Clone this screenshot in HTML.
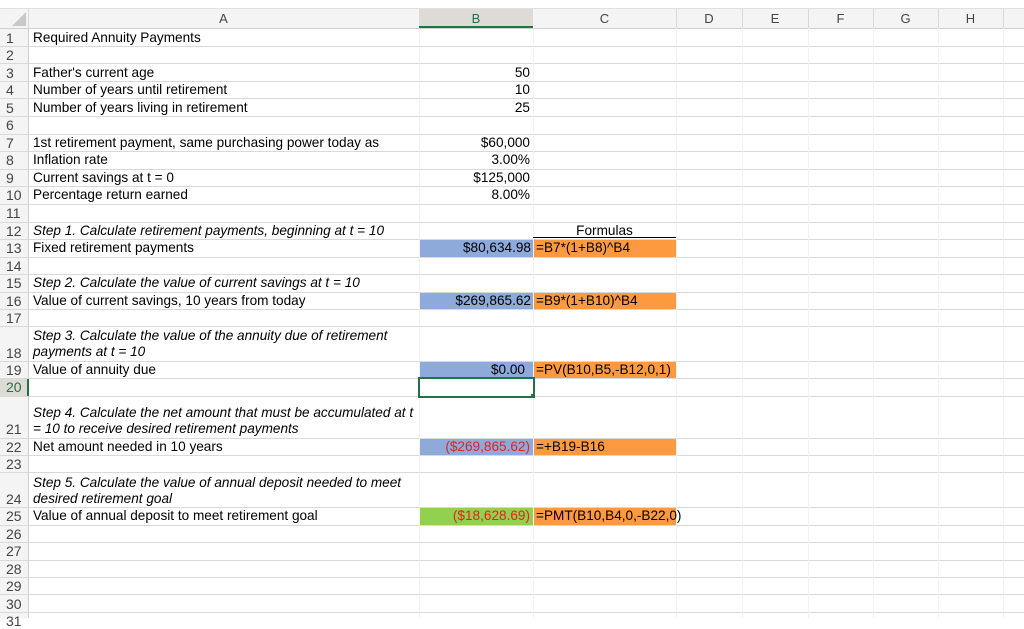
<!DOCTYPE html>
<html><head><style>
body{margin:0;width:1024px;height:618px;overflow:hidden;background:#fff;font-family:"Liberation Sans",Arial,sans-serif;font-size:13.6px;color:#000;position:relative}
.a{position:absolute}
.h{position:absolute;left:0;width:1024px;height:1px;background:#d9d9d9}
.v{position:absolute;top:28px;width:1px;height:590px;background:#f2f2f2}
.ch{position:absolute;top:9px;height:19px;line-height:19px;text-align:center;color:#444;font-size:13px}
.rn{position:absolute;left:0;width:27px;padding-left:6px;box-sizing:border-box;color:#444;font-size:14px;line-height:16px}
.t{position:absolute;left:33px;line-height:16px;white-space:nowrap}
.i{font-style:italic}
.r{position:absolute;left:419px;width:111px;text-align:right;line-height:16px}
</style></head><body>
<div class="a" style="left:0;top:9px;width:1024px;height:19px;background:#f4f4f4"></div>
<div class="a" style="left:0;top:8px;width:1024px;height:1px;background:#e0e0e0"></div>
<div class="a" style="left:0;top:28px;width:1024px;height:1px;background:#cfcfcf"></div>
<div class="a" style="left:419px;top:9px;width:114px;height:19px;background:#dedbd7"></div>
<div class="a" style="left:419px;top:26px;width:114px;height:2px;background:#217346"></div>
<svg class="a" style="left:12px;top:12px" width="14" height="14"><polygon points="14,0 14,14 0,14" fill="#c8c8c8"/></svg>
<div class="ch" style="left:28px;width:391px">A</div>
<div class="ch" style="left:419px;width:114px;color:#217346">B</div>
<div class="ch" style="left:533px;width:143px">C</div>
<div class="ch" style="left:676px;width:66px">D</div>
<div class="ch" style="left:742px;width:66px">E</div>
<div class="ch" style="left:808px;width:65px">F</div>
<div class="ch" style="left:873px;width:65px">G</div>
<div class="ch" style="left:938px;width:65px">H</div>
<div class="a" style="left:28px;top:9px;width:1px;height:19px;background:#d8d8d8"></div>
<div class="a" style="left:676px;top:9px;width:1px;height:19px;background:#d8d8d8"></div>
<div class="a" style="left:742px;top:9px;width:1px;height:19px;background:#d8d8d8"></div>
<div class="a" style="left:808px;top:9px;width:1px;height:19px;background:#d8d8d8"></div>
<div class="a" style="left:873px;top:9px;width:1px;height:19px;background:#d8d8d8"></div>
<div class="a" style="left:938px;top:9px;width:1px;height:19px;background:#d8d8d8"></div>
<div class="a" style="left:1003px;top:9px;width:1px;height:19px;background:#d8d8d8"></div>

<div class="a" style="left:0;top:29px;width:28px;height:589px;background:#f4f4f4"></div>
<div class="a" style="left:0;top:378px;width:28px;height:18px;background:#dedbd7"></div>
<div class="a" style="left:28px;top:29px;width:1px;height:589px;background:#cfcfcf"></div>
<div class="a" style="left:27px;top:378px;width:2px;height:18px;background:#217346"></div>

<div class="a" style="left:419px;top:239px;width:114px;height:18px;background:#8eaadb"></div>
<div class="a" style="left:533px;top:239px;width:143px;height:18px;background:#fd9a3f"></div>
<div class="a" style="left:419px;top:292px;width:114px;height:17px;background:#8eaadb"></div>
<div class="a" style="left:533px;top:292px;width:143px;height:17px;background:#fd9a3f"></div>
<div class="a" style="left:419px;top:361px;width:114px;height:17px;background:#8eaadb"></div>
<div class="a" style="left:533px;top:361px;width:143px;height:17px;background:#fd9a3f"></div>
<div class="a" style="left:419px;top:438px;width:114px;height:17px;background:#8eaadb"></div>
<div class="a" style="left:533px;top:438px;width:143px;height:17px;background:#fd9a3f"></div>
<div class="a" style="left:419px;top:507px;width:114px;height:18px;background:#92d050"></div>
<div class="a" style="left:533px;top:507px;width:143px;height:18px;background:#fd9a3f"></div>

<div class="h" style="top:46px"></div><div class="h" style="top:63px"></div><div class="h" style="top:81px"></div>
<div class="h" style="top:98px"></div><div class="h" style="top:116px"></div><div class="h" style="top:134px"></div>
<div class="h" style="top:151px"></div><div class="h" style="top:169px"></div><div class="h" style="top:186px"></div>
<div class="h" style="top:204px"></div><div class="h" style="top:222px"></div><div class="h" style="top:239px"></div>
<div class="h" style="top:257px"></div><div class="h" style="top:274px"></div><div class="h" style="top:292px"></div>
<div class="h" style="top:309px"></div><div class="h" style="top:326px"></div><div class="h" style="top:361px"></div>
<div class="h" style="top:378px"></div><div class="h" style="top:396px"></div><div class="h" style="top:438px"></div>
<div class="h" style="top:455px"></div><div class="h" style="top:472px"></div><div class="h" style="top:507px"></div>
<div class="h" style="top:525px"></div><div class="h" style="top:542px"></div><div class="h" style="top:560px"></div>
<div class="h" style="top:577px"></div><div class="h" style="top:594px"></div><div class="h" style="top:612px"></div>
<div class="v" style="left:419px"></div><div class="v" style="left:533px"></div><div class="v" style="left:676px"></div>
<div class="v" style="left:742px"></div><div class="v" style="left:808px"></div><div class="v" style="left:873px"></div>
<div class="v" style="left:938px"></div><div class="v" style="left:1003px"></div>
<div class="a" style="left:533px;top:237px;width:143px;height:1px;background:#000"></div>

<div class="a" style="left:418px;top:377px;width:113px;height:17px;border:2px solid #217346"></div>
<div class="a" style="left:531px;top:394px;width:4px;height:4px;background:#217346"></div>

<div class="rn" style="top:30px">1</div><div class="rn" style="top:47px">2</div><div class="rn" style="top:65px">3</div>
<div class="rn" style="top:82px">4</div><div class="rn" style="top:100px">5</div><div class="rn" style="top:117px">6</div>
<div class="rn" style="top:135px">7</div><div class="rn" style="top:152px">8</div><div class="rn" style="top:170px">9</div>
<div class="rn" style="top:187px">10</div><div class="rn" style="top:205px">11</div><div class="rn" style="top:223px">12</div>
<div class="rn" style="top:240px">13</div><div class="rn" style="top:258px">14</div><div class="rn" style="top:275px">15</div>
<div class="rn" style="top:293px">16</div><div class="rn" style="top:310px">17</div><div class="rn" style="top:345px">18</div>
<div class="rn" style="top:362px">19</div><div class="rn" style="top:379px;color:#217346">20</div><div class="rn" style="top:421px">21</div>
<div class="rn" style="top:439px">22</div><div class="rn" style="top:456px">23</div><div class="rn" style="top:491px">24</div>
<div class="rn" style="top:508px">25</div><div class="rn" style="top:526px">26</div><div class="rn" style="top:543px">27</div>
<div class="rn" style="top:561px">28</div><div class="rn" style="top:578px">29</div><div class="rn" style="top:596px">30</div>
<div class="rn" style="top:613px">31</div>

<div class="t" style="top:30px">Required Annuity Payments</div>
<div class="t" style="top:65px">Father's current age</div>
<div class="t" style="top:82px">Number of years until retirement</div>
<div class="t" style="top:100px">Number of years living in retirement</div>
<div class="t" style="top:135px">1st retirement payment, same purchasing power today as</div>
<div class="t" style="top:152px">Inflation rate</div>
<div class="t" style="top:170px">Current savings at t = 0</div>
<div class="t" style="top:187px">Percentage return earned</div>
<div class="t i" style="top:223px">Step 1. Calculate retirement payments, beginning at t = 10</div>
<div class="t" style="top:240px">Fixed retirement payments</div>
<div class="t i" style="top:275px">Step 2. Calculate the value of current savings at t = 10</div>
<div class="t" style="top:293px">Value of current savings, 10 years from today</div>
<div class="t i" style="top:328px">Step 3. Calculate the value of the annuity due of retirement<br>payments at t = 10</div>
<div class="t" style="top:362px">Value of annuity due</div>
<div class="t i" style="top:405px">Step 4. Calculate the net amount that must be accumulated at t<br>= 10 to receive desired retirement payments</div>
<div class="t" style="top:439px">Net amount needed in 10 years</div>
<div class="t i" style="top:475px">Step 5. Calculate the value of annual deposit needed to meet<br>desired retirement goal</div>
<div class="t" style="top:508px">Value of annual deposit to meet retirement goal</div>

<div class="r" style="top:65px">50</div>
<div class="r" style="top:82px">10</div>
<div class="r" style="top:100px">25</div>
<div class="r" style="top:135px">$60,000</div>
<div class="r" style="top:152px">3.00%</div>
<div class="r" style="top:170px">$125,000</div>
<div class="r" style="top:187px">8.00%</div>
<div class="r" style="top:240px;width:112px">$80,634.98</div>
<div class="r" style="top:293px;width:112px">$269,865.62</div>
<div class="r" style="top:362px;width:106px">$0.00</div>
<div class="r" style="top:439px;width:111px;color:#e8201a">($269,865.62)</div>
<div class="r" style="top:508px;width:111px;color:#e8201a">($18,628.69)</div>

<div class="a" style="left:533px;width:143px;top:223px;text-align:center;line-height:16px">Formulas</div>
<div class="a" style="left:536px;top:240px;line-height:16px">=B7*(1+B8)^B4</div>
<div class="a" style="left:536px;top:293px;line-height:16px">=B9*(1+B10)^B4</div>
<div class="a" style="left:536px;top:362px;line-height:16px;white-space:nowrap">=PV(B10,B5,-B12,0,1)</div>
<div class="a" style="left:536px;top:439px;line-height:16px">=+B19-B16</div>
<div class="a" style="left:536px;top:508px;line-height:16px;white-space:nowrap">=PMT(B10,B4,0,-B22,0)</div>
</body></html>
